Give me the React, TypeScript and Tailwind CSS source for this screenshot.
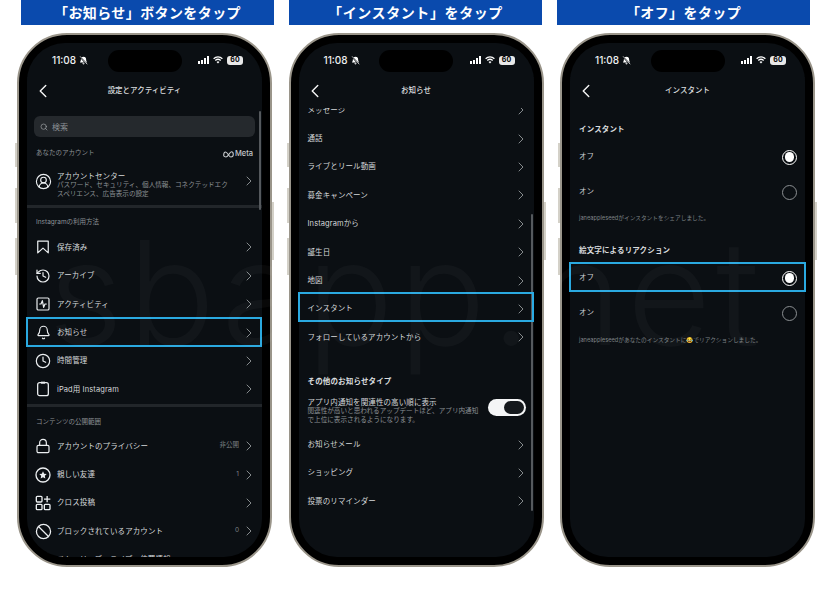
import type { ReactNode } from "react";
import { Ban, Bell, ChevronLeft, ChevronRight, CircleUserRound, Clock, History, Lock, Search, SquareActivity } from "lucide-react";

const FONT = "font-['Inter','Noto_Sans_CJK_JP',sans-serif]";

function MutedBell() {
  return (
    <svg viewBox="0 0 24 24" className="h-[9px] w-[9px]" fill="white" stroke="none">
      <path d="M12 2a7 7 0 0 0-7 7c0 5-2.5 7-2.5 8.5h19C21.500 16 19 14 19 9a7 7 0 0 0-7-7zM9 19.500a3 3 0 0 0 6 0z" />
      <path d="M3 2l18 20" stroke="#0b0f13" strokeWidth="4" />
      <path d="M3 1l19 21" stroke="white" strokeWidth="2" />
    </svg>
  );
}

function MetaMark() {
  return (
    <svg viewBox="0 0 20 12" className="h-[7px] w-[11px]" fill="none" stroke="currentColor" strokeWidth="2">
      <path d="M1.200 8c0-3.500 1.500-6.500 3.500-6.500 3.500 0 6 9 9.500 9 2.500 0 4.500-2 4.500-4.500s-1.500-5-3.500-5c-3 0-6 10-10 9.500-2.500-.2-4-1-4-2.500z" />
    </svg>
  );
}

function BookmarkIcon() {
  return (
    <svg viewBox="0 0 24 24" className="h-[14px] w-[14px]" fill="none" stroke="currentColor" strokeWidth="2.100" strokeLinejoin="round">
      <path d="M3 2h18v20l-9-8-9 8z" />
    </svg>
  );
}

function TabletIcon() {
  return (
    <svg viewBox="0 0 24 24" className="h-[16px] w-[16px]" fill="none" stroke="currentColor" strokeWidth="1.900">
      <rect x="4" y="2.500" width="16" height="19.500" rx="3" />
      <path d="M9 2.500h6" strokeWidth="3" />
    </svg>
  );
}

function StarCircle() {
  return (
    <svg viewBox="0 0 24 24" className="h-[16px] w-[16px]" fill="none" stroke="currentColor" strokeWidth="2">
      <circle cx="12" cy="12" r="10.500" />
      <path fill="currentColor" stroke="none" d="M12 6.500l1.700 3.600 3.900.5-2.900 2.700.8 3.900-3.500-2-3.500 2 .8-3.900-2.900-2.700 3.900-.5z" />
    </svg>
  );
}

function GridPlus() {
  return (
    <svg viewBox="0 0 24 24" className="h-[16px] w-[16px]" fill="none" stroke="currentColor" strokeWidth="2">
      <rect x="2" y="2" width="8.500" height="8.500" rx="1.500" />
      <rect x="2" y="14" width="8.500" height="8" rx="1.500" />
      <rect x="14" y="14" width="8.500" height="8" rx="1.500" />
      <path d="M18.200 1.500v9.500M13.500 6.200h9.500" />
    </svg>
  );
}

function Chevron({ push }: { push?: boolean }) {
  return <ChevronRight className={`mr-[5px] h-[16px] w-[16px] shrink-0 text-[#a5a9ac] ${push ? "ml-auto" : ""}`} strokeWidth={1.200} />;
}

function Row({ icon, label, value }: { icon?: ReactNode; label: string; value?: string }) {
  return (
    <div className="flex h-[28.4px] items-center">
      {icon && <div className="ml-[5px] flex w-[22px] justify-center text-[#eceff1]">{icon}</div>}
      <span className={`text-[7.5px] tracking-[0.1px] text-[#d5d8da] ${icon ? "ml-[3px]" : "ml-[9px]"}`}>{label}</span>
      {value && <span className="ml-auto mr-[2px] text-[6.500px] text-[#7d8286]">{value}</span>}
      <Chevron push={!value} />
    </div>
  );
}

function SectionLabel({ children, extra }: { children: ReactNode; extra?: ReactNode }) {
  return (
    <div className="flex h-[12px] items-center justify-between px-[9px] text-[6.500px] text-[#8c9195]">
      <span>{children}</span>
      {extra}
    </div>
  );
}

function Heading({ children }: { children: ReactNode }) {
  return <div className="flex h-[12px] items-center px-[9px] text-[7.500px] font-bold tracking-[0.150px] text-[#d9dcde]">{children}</div>;
}

function Radio({ on }: { on?: boolean }) {
  return on ? (
    <div className="flex h-[15px] w-[15px] items-center justify-center rounded-full border-[1.500px] border-white">
      <div className="h-[9.500px] w-[9.500px] rounded-full bg-white" />
    </div>
  ) : (
    <div className="h-[15px] w-[15px] rounded-full border border-[#8b8f92]" />
  );
}

function RadioRow({ label, on, height }: { label: string; on?: boolean; height: string }) {
  return (
    <div className={`flex items-center justify-between pl-[9px] pr-[1px] ${height}`}>
      <span className="text-[7.500px] text-[#c9cccf]">{label}</span>
      <Radio on={on} />
    </div>
  );
}

function Phone({ title, children, scrollClass, highlightClass }: { title: string; children: ReactNode; scrollClass?: string; highlightClass: string }) {
  return (
    <div className="relative h-[534px] w-[255px] shrink-0 rounded-[50px] border-[2px] border-[#9a958a] bg-black p-[8px]">
      <div className="absolute -left-[4px] top-[108px] h-[24px] w-[2px] bg-[#d4d1c8]" />
      <div className="absolute -left-[4px] top-[153px] h-[35px] w-[2px] bg-[#d4d1c8]" />
      <div className="absolute -left-[4px] top-[203px] h-[37px] w-[2px] bg-[#d4d1c8]" />
      <div className="absolute -right-[4px] top-[167px] h-[58px] w-[2px] bg-[#d4d1c8]" />
      <div className="relative flex h-full flex-col overflow-hidden rounded-[38px] bg-[#0b0f13]">
        <div className="relative flex h-[34px] shrink-0 items-center justify-between pl-[25px] pr-[19px]">
          <div className="flex items-center gap-[3px] text-[10px] font-medium text-[#eef0f1]">
            11:08
            <MutedBell />
          </div>
          <div className="absolute left-1/2 top-[7px] h-[22px] w-[74px] -translate-x-1/2 rounded-full bg-black" />
          <div className="flex items-center gap-[4px]">
            <div className="flex items-end gap-[1px]">
              <div className="h-[3px] w-[2px] bg-white" />
              <div className="h-[4px] w-[2px] bg-white" />
              <div className="h-[6px] w-[2px] bg-white" />
              <div className="h-[8px] w-[2px] bg-white" />
            </div>
            <svg viewBox="0 0 24 24" className="h-[10px] w-[10px]" fill="none" stroke="white" strokeWidth="3">
              <path d="M1.500 9a15 15 0 0 1 21 0M5.500 13.200a9.500 9.500 0 0 1 13 0" />
              <path d="M12 20.500l-3.400-3.600a4.800 4.800 0 0 1 6.800 0z" fill="white" stroke="none" />
            </svg>
            <div className="flex h-[9px] w-[16px] items-center justify-center rounded-[3px] bg-[#e8e8e8] text-[7px] font-bold text-black">60</div>
          </div>
        </div>
        <div className="relative z-10 flex h-[31px] shrink-0 items-center justify-center bg-[#0b0f13] pb-[3px]">
          <ChevronLeft className="absolute left-[5px] h-[22px] w-[22px] text-[#f0f0f0]" strokeWidth={1.600} />
          <span className="text-[7.500px] font-medium text-[#d9dcde]">{title}</span>
        </div>
        <div className="min-h-0 flex-1 overflow-hidden">{children}</div>
        {scrollClass && <div className={`absolute right-[1px] w-[2px] rounded-full bg-[#55595d] ${scrollClass}`} />}
      </div>
      <div className={`absolute border-2 border-[#2aa9e0] ${highlightClass}`} />
    </div>
  );
}

export default function App() {
  return (
    <div className={`relative h-[600px] w-[832px] overflow-hidden bg-white ${FONT}`}>
      <div className="flex gap-[15px] pl-[21px]">
        <div className="flex h-[25px] w-[253px] items-center justify-center bg-[#0a4aad] text-[14px] font-bold tracking-[0.400px] text-white">「お知らせ」ボタンをタップ</div>
        <div className="flex h-[25px] w-[253px] items-center justify-center bg-[#0a4aad] text-[14px] font-bold tracking-[0.600px] text-white">「インスタント」をタップ</div>
        <div className="flex h-[25px] w-[253px] items-center justify-center bg-[#0a4aad] text-[14px] font-bold tracking-[0.400px] text-white">「オフ」をタップ</div>
      </div>
      <div className="mt-[8px] flex gap-[16.500px] pl-[17px]">
        <Phone title="設定とアクティビティ" scrollClass="top-[68px] h-[99px]" highlightClass="left-[7px] top-[282px] h-[30px] w-[236px]">
          <div className="pt-[8px]">
            <div className="mx-[7px] flex h-[21px] items-center gap-[4px] rounded-[6px] bg-[#25292d] px-[6px] text-[8px] text-[#8c9195]">
              <Search className="h-[8px] w-[8px] text-[#a5a9ac]" strokeWidth={2} />
              検索
            </div>
            <div className="mt-[11px]">
              <SectionLabel
                extra={
                  <span className="flex items-center gap-[1px] text-[7.500px] font-medium text-[#c5c8cb]">
                    <MetaMark />
                    Meta
                  </span>
                }
              >
                あなたのアカウント
              </SectionLabel>
            </div>
            <div className="mt-[7.500px] flex h-[27px] items-center">
              <div className="ml-[5px] flex w-[22px] justify-center text-[#eceff1]">
                <CircleUserRound className="h-[17px] w-[17px]" strokeWidth={1.600} />
              </div>
              <div className="ml-[3px] mt-[8px] w-[174px]">
                <div className="text-[7.500px] leading-[9px] tracking-[0.100px] text-[#d5d8da]">アカウントセンター</div>
                <div className="text-[6.600px] leading-[9px] text-[#8c9195]">パスワード、セキュリティ、個人情報、コネクテッドエクスペリエンス、広告表示の設定</div>
              </div>
              <Chevron push />
            </div>
            <div className="mt-[10.500px] h-[3px] bg-[#22262a]" />
            <div className="mt-[9px]">
              <SectionLabel>Instagramの利用方法</SectionLabel>
            </div>
            <div className="mt-[4.300px]">
              <Row icon={<BookmarkIcon />} label="保存済み" />
              <Row icon={<History className="h-[16px] w-[16px]" strokeWidth={1.800} />} label="アーカイブ" />
              <Row icon={<SquareActivity className="h-[16px] w-[16px]" strokeWidth={1.800} />} label="アクティビティ" />
              <Row icon={<Bell className="h-[15px] w-[15px]" strokeWidth={1.800} />} label="お知らせ" />
              <Row icon={<Clock className="h-[16px] w-[16px]" strokeWidth={1.800} />} label="時間管理" />
              <Row icon={<TabletIcon />} label="iPad用 Instagram" />
            </div>
            <div className="h-[3px] bg-[#22262a]" />
            <div className="mt-[10px]">
              <SectionLabel>コンテンツの公開範囲</SectionLabel>
            </div>
            <div className="mt-[3.300px]">
              <Row icon={<Lock className="h-[16px] w-[16px]" strokeWidth={1.800} />} label="アカウントのプライバシー" value="非公開" />
              <Row icon={<StarCircle />} label="親しい友達" value="1" />
              <Row icon={<GridPlus />} label="クロス投稿" />
              <Row icon={<Ban className="h-[17px] w-[17px]" strokeWidth={1.800} />} label="ブロックされているアカウント" value="0" />
              <Row icon={<Ban className="h-[17px] w-[17px]" strokeWidth={1.800} />} label="ストーリーズ・ライブ・位置情報" />
            </div>
          </div>
        </Phone>
        <Phone title="お知らせ" scrollClass="top-[171px] h-[297px]" highlightClass="left-[7px] top-[257px] h-[30px] w-[236px]">
          <div className="-mt-[12px]">
            <Row label="メッセージ" />
            <Row label="通話" />
            <Row label="ライブとリール動画" />
            <Row label="募金キャンペーン" />
            <Row label="Instagramから" />
            <Row label="誕生日" />
            <Row label="地図" />
            <Row label="インスタント" />
            <Row label="フォローしているアカウントから" />
          </div>
          <div className="mt-[24px]">
            <Heading>その他のお知らせタイプ</Heading>
          </div>
          <div className="mt-[10px] flex items-start pl-[9px] pr-[8px]">
            <div className="w-[174px]">
              <div className="text-[7.500px] leading-[9px] tracking-[0.100px] text-[#d5d8da]">アプリ内通知を関連性の高い順に表示</div>
              <div className="text-[6.600px] leading-[9px] text-[#8c9195]">関連性が高いと思われるアップデートほど、アプリ内通知で上位に表示されるようになります。</div>
            </div>
            <div className="ml-auto mt-[1px] flex h-[17px] w-[38px] items-center justify-end rounded-full bg-[#f4f5f6] pr-[2px]">
              <div className="h-[13px] w-[20px] rounded-full bg-[#14181c]" />
            </div>
          </div>
          <div className="mt-[6px]">
            <Row label="お知らせメール" />
            <Row label="ショッピング" />
            <Row label="投票のリマインダー" />
          </div>
        </Phone>
        <Phone title="インスタント" highlightClass="left-[7px] top-[227px] h-[30px] w-[237px]">
          <div className="pr-[7px] pt-[16px]">
            <Heading>インスタント</Heading>
            <RadioRow label="オフ" on height="mt-[3.500px] h-[35px]" />
            <RadioRow label="オン" height="h-[35px]" />
            <div className="mt-[1.500px] px-[9px] text-[5.700px] leading-[14px] text-[#7d8286]">janeappleseedがインスタントをシェアしました。</div>
            <div className="mt-[20px]">
              <Heading>絵文字によるリアクション</Heading>
            </div>
            <RadioRow label="オフ" on height="mt-[6px] h-[30px]" />
            <RadioRow label="オン" height="mt-[2.500px] h-[35px]" />
            <div className="mt-[2.500px] px-[9px] text-[5.700px] leading-[14px] text-[#7d8286]">janeappleseedがあなたのインスタントに😂でリアクションしました。</div>
          </div>
        </Phone>
      </div>
      <div className="pointer-events-none absolute left-[48px] top-[220px] whitespace-nowrap text-[145px] font-light leading-none tracking-[5px] text-white/[0.03]">sbapp.net</div>
    </div>
  );
}
